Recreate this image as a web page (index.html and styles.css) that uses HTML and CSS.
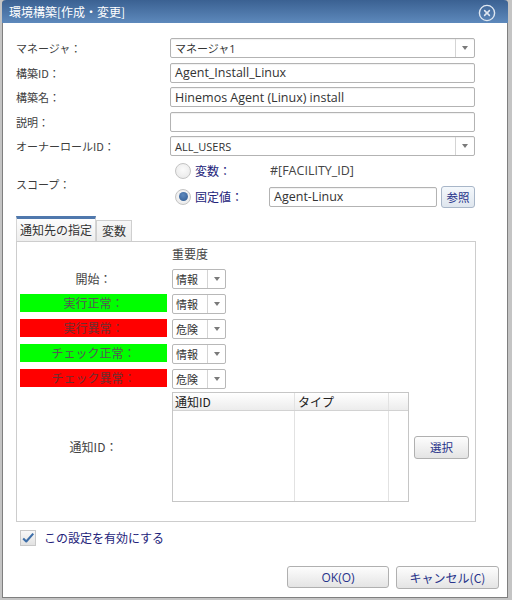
FILE: index.html
```html
<!DOCTYPE html>
<html lang="ja">
<head>
<meta charset="utf-8">
<title>環境構築[作成・変更]</title>
<link rel="stylesheet" href="styles.css">
</head>
<body>
<div class="dialog">
  <div class="titlebar">
    <span class="title">環境構築[作成・変更]</span>
    <svg class="close" width="18" height="18" viewBox="0 0 18 18"><circle cx="9" cy="9" r="7.6" fill="none" stroke="#dfe7f1" stroke-width="1.4"/><path d="M6.6 6.6 L11.4 11.4 M11.4 6.6 L6.6 11.4" stroke="#dfe7f1" stroke-width="1.5" stroke-linecap="round"/></svg>
  </div>
  <div class="content">
    <div class="form">
      <div class="lbl">マネージャ：</div>
      <div class="field select"><span class="val small">マネージャ1</span><span class="drop"><i class="tri"></i></span></div>
      <div class="lbl">構築ID：</div>
      <div class="field"><span class="val">Agent_Install_Linux</span></div>
      <div class="lbl">構築名：</div>
      <div class="field"><span class="val">Hinemos Agent (Linux) install</span></div>
      <div class="lbl">説明：</div>
      <div class="field"></div>
      <div class="lbl">オーナーロールID：</div>
      <div class="field select"><span class="val small">ALL_USERS</span><span class="drop"><i class="tri"></i></span></div>
      <div class="lbl scope-lbl">スコープ：</div>
      <div class="scope">
        <div class="scope-row r1">
          <span class="radio"></span><span class="rlabel">変数：</span><span class="fixed">#[FACILITY_ID]</span>
        </div>
        <div class="scope-row r2">
          <span class="radio on"></span><span class="rlabel">固定値：</span>
          <div class="field short"><span class="val">Agent-Linux</span></div>
          <span class="btn ref">参照</span>
        </div>
      </div>
    </div>

    <div class="tabs">
      <div class="tab active">通知先の指定</div>
      <div class="tab">変数</div>
    </div>
    <div class="panel">
      <div class="prow head"><div class="pl"></div><div class="pr">重要度</div></div>
      <div class="prow"><div class="pl">開始：</div><div class="pr"><div class="sel"><span>情報</span><span class="drop"><i class="tri"></i></span></div></div></div>
      <div class="prow"><div class="pl bar green">実行正常：</div><div class="pr"><div class="sel"><span>情報</span><span class="drop"><i class="tri"></i></span></div></div></div>
      <div class="prow"><div class="pl bar red">実行異常：</div><div class="pr"><div class="sel"><span>危険</span><span class="drop"><i class="tri"></i></span></div></div></div>
      <div class="prow"><div class="pl bar green">チェック正常：</div><div class="pr"><div class="sel"><span>情報</span><span class="drop"><i class="tri"></i></span></div></div></div>
      <div class="prow"><div class="pl bar red">チェック異常：</div><div class="pr"><div class="sel"><span>危険</span><span class="drop"><i class="tri"></i></span></div></div></div>
      <div class="prow trow">
        <div class="pl">通知ID：</div>
        <div class="pr tablewrap">
          <div class="table">
            <div class="thead"><span class="c1">通知ID</span><span class="c2">タイプ</span><span class="c3"></span></div>
            <div class="tbody"><span class="c1"></span><span class="c2"></span><span class="c3"></span></div>
          </div>
          <span class="btn pick">選択</span>
        </div>
      </div>
    </div>

    <div class="check-row">
      <span class="checkbox"><svg width="16" height="14" viewBox="0 0 16 14"><path d="M2.5 7.5 L6 11 L14 2" fill="none" stroke="#3d6ea8" stroke-width="2.4" stroke-linejoin="round"/></svg></span>
      <span class="clabel">この設定を有効にする</span>
    </div>
  </div>
  <div class="footer">
    <span class="btn ok">OK(O)</span>
    <span class="btn cancel">キャンセル(C)</span>
  </div>
</div>
</body>
</html>
```

FILE: styles.css
```css
* { box-sizing: border-box; }
html, body { margin: 0; padding: 0; }
body {
  width: 512px;
  height: 600px;
  overflow: hidden;
  background: #c4c4c4;
  font-family: "Noto Sans CJK JP", sans-serif;
  font-size: 11px;
  color: #3d3d3d;
}
.dialog {
  margin-left: 2px;
  width: 506px;
  height: 598px;
  background: #fff;
  border: 1px solid #7f7f7f;
  border-top: none;
  border-radius: 4px 4px 0 0;
  display: flex;
  flex-direction: column;
}
.titlebar {
  height: 23px;
  margin: 0 -1px;
  background: linear-gradient(#3b6192, #5d89bc);
  border-radius: 4px 4px 0 0;
  display: flex;
  align-items: center;
  justify-content: space-between;
  padding: 0 12px 0 7px;
  color: #fff;
  font-size: 12px;
}
.title { line-height: 1; }
.close { display: block; margin-top: 2px; }
.content {
  padding: 15px 0 0 13px;
  flex: 1;
}
.form {
  display: grid;
  grid-template-columns: 154px 305px;
  row-gap: 4.5px;
  align-items: center;
}
.lbl { line-height: 16px; }
.field {
  height: 20px;
  border: 1px solid #b3b3b3;
  border-radius: 2px;
  background: #fff;
  box-shadow: inset 0 1px 1px rgba(0,0,0,0.06);
  display: flex;
  align-items: center;
  font-family: "Open Sans", "Noto Sans CJK JP", sans-serif;
  font-size: 12.5px;
  color: #333;
}
.val { padding-left: 4px; white-space: nowrap; }
.val.small { font-size: 11px; }
.select { justify-content: space-between; }
.drop {
  width: 19px;
  height: 100%;
  border-left: 1px solid #d4d4d4;
  display: flex;
  align-items: center;
  justify-content: center;
}
.tri {
  width: 0; height: 0;
  border-left: 3.5px solid transparent;
  border-right: 3.5px solid transparent;
  border-top: 4px solid #7a7a7a;
}
.scope-lbl { align-self: center; }
.scope { display: flex; flex-direction: column; gap: 5px; }
.scope-row { display: flex; align-items: center; }
.scope-row.r1 { height: 20px; }
.scope-row.r2 { height: 22px; }
.radio {
  width: 16px; height: 16px;
  flex: none;
  margin-left: 5px;
  border-radius: 50%;
  border: 1px solid #c4c4c4;
  background: radial-gradient(circle at 50% 40%, #fbfbfb, #e6e6e6);
  display: flex; align-items: center; justify-content: center;
}
.radio.on::after {
  content: "";
  width: 9px; height: 9px;
  border-radius: 50%;
  background: radial-gradient(circle at 45% 35%, #5d88bd, #2f5a90);
}
.rlabel { width: 78px; flex: none; padding-left: 4px; color: #23237a; font-size: 12px; }
.fixed { font-family: "Open Sans", "Noto Sans CJK JP", sans-serif; font-size: 12.5px; color: #444; padding-left: 1px; }
.field.short { width: 168px; height: 20px; flex: none; }
.btn {
  display: flex;
  align-items: center;
  justify-content: center;
  border: 1px solid #b0b0b0;
  border-radius: 3px;
  background: linear-gradient(#fdfdfd, #e4e4e4);
  color: #27338a;
  font-size: 11.5px;
}
.ref { width: 34px; height: 22px; margin-left: 4px; border-color: #a8b6c8; background: linear-gradient(#f4f8fc, #dfe6ee); }

.tabs {
  margin-top: 8px;
  display: flex;
  align-items: flex-end;
  height: 25px;
  width: 460px;
}
.tab {
  height: 21px;
  padding: 0 5px;
  border: 1px solid #cfcfcf;
  border-bottom: none;
  background: linear-gradient(#f7f7f7, #ebebeb);
  display: flex;
  align-items: center;
  font-size: 12px;
  color: #333;
  white-space: nowrap;
}
.tab.active {
  height: 25px;
  width: 80px;
  padding: 0 3px;
  justify-content: center;
  border: 1px solid #d5d5d5;
  border-top: 3px solid #4f78ad;
  border-bottom: none;
  background: linear-gradient(#fdfdfd, #eeeeee);
}
.panel {
  width: 460px;
  height: 281px;
  border: 1px solid #cdcdcd;
  padding: 4px 0 0 3px;
}
.prow {
  display: flex;
  height: 20px;
  margin-bottom: 5px;
  align-items: flex-start;
}
.prow.head { height: 16px; margin-bottom: 7px; align-items: center; font-size: 12px; }
.pl {
  width: 147px;
  height: 20px;
  display: flex;
  align-items: center;
  justify-content: center;
  font-size: 12px;
  color: #444;
}
.prow.head .pl { height: 16px; }
.pl.bar { height: 18px; margin-top: 0; color: #555; }
.green { background: #00ff00; }
.red { background: #ff0000; color: #6a3030 !important; }
.pr { margin-left: 5px; display: flex; }
.head .pr { color: #444; }
.sel {
  width: 54px;
  height: 20px;
  border: 1px solid #b8b8b8;
  border-radius: 2px;
  display: flex;
  align-items: center;
  justify-content: space-between;
  padding-left: 3px;
  font-size: 11px;
  color: #333;
  background: #fff;
}
.sel .drop { width: 18px; }
.trow { height: 110px; margin-top: -2px; margin-bottom: 0; align-items: center; }
.trow .pl { height: 110px; }
.tablewrap { align-items: center; height: 110px; }
.table {
  width: 237px;
  height: 110px;
  border: 1px solid #c6c6c6;
  display: flex;
  flex-direction: column;
}
.thead {
  height: 18px;
  display: flex;
  background: linear-gradient(#ffffff, #ececec);
  border-bottom: 1px solid #d2d2d2;
  font-size: 12px;
  color: #222;
}
.tbody { flex: 1; display: flex; }
.c1 { width: 122px; border-right: 1px solid #e2e2e2; padding-left: 2px; line-height: 17px; }
.c2 { width: 94px; border-right: 1px solid #e2e2e2; padding-left: 3px; line-height: 17px; }
.c3 { flex: 1; }
.pick { width: 55px; height: 23px; margin-left: 5px; margin-top: 1px; }

.check-row {
  margin-top: 8px;
  display: flex;
  align-items: center;
  height: 16px;
  padding-left: 4px;
}
.checkbox {
  width: 16px; height: 16px;
  border: 1px solid #c8c8c8;
  background: linear-gradient(#f8f8f8, #e2e2e2);
  display: flex; align-items: center; justify-content: center;
}
.clabel { margin-left: 8px; font-size: 12px; color: #23237a; }
.footer {
  display: flex;
  justify-content: flex-end;
  gap: 7px;
  padding: 0 8px 8px 0;
}
.ok { width: 102px; height: 22px; font-family: "Open Sans", "Noto Sans CJK JP", sans-serif; font-size: 12px; }
.cancel { width: 103px; height: 23px; font-size: 12px; }
```
